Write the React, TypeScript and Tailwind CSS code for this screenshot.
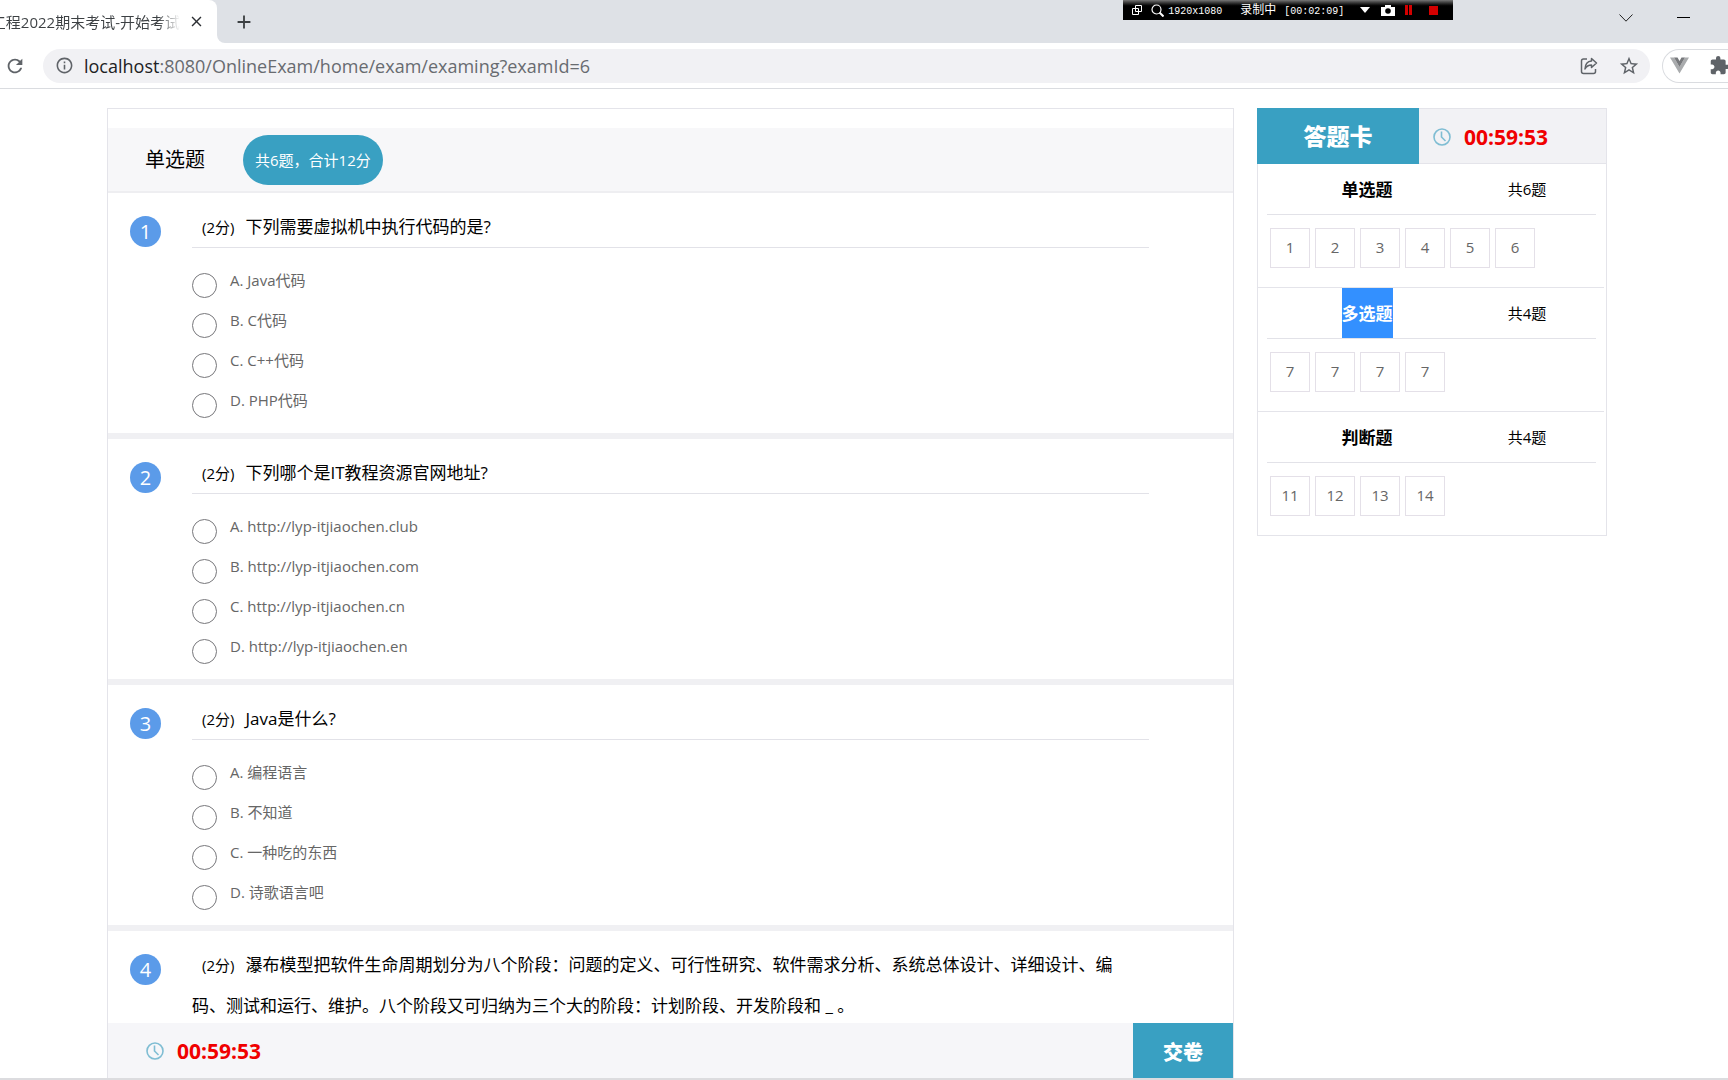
import { Fragment } from "react";
import { MdClose, MdAdd, MdRefresh, MdInfoOutline, MdStarBorder, MdExtension } from "react-icons/md";

const questions = [
  {
    title: "下列需要虚拟机中执行代码的是?",
    options: ["A. Java代码", "B. C代码", "C. C++代码", "D. PHP代码"],
  },
  {
    title: "下列哪个是IT教程资源官网地址?",
    options: [
      "A. http://lyp-itjiaochen.club",
      "B. http://lyp-itjiaochen.com",
      "C. http://lyp-itjiaochen.cn",
      "D. http://lyp-itjiaochen.en",
    ],
  },
  {
    title: "Java是什么?",
    options: ["A. 编程语言", "B. 不知道", "C. 一种吃的东西", "D. 诗歌语言吧"],
  },
  {
    title:
      "瀑布模型把软件生命周期划分为八个阶段：问题的定义、可行性研究、软件需求分析、系统总体设计、详细设计、编码、测试和运行、维护。八个阶段又可归纳为三个大的阶段：计划阶段、开发阶段和 _ 。",
    options: [],
  },
];

const cardSections = [
  { name: "单选题", count: "共6题", numbers: [1, 2, 3, 4, 5, 6], selected: false },
  { name: "多选题", count: "共4题", numbers: [7, 7, 7, 7], selected: true },
  { name: "判断题", count: "共4题", numbers: [11, 12, 13, 14], selected: false },
];

function ClockIcon() {
  return (
    <svg className="h-[18px] w-[18px] shrink-0" viewBox="0 0 18 18" fill="none" stroke="#7fbdd3" strokeWidth="1.6">
      <circle cx="9" cy="9" r="8" />
      <path d="M8.5 3.5V9l4 4" />
    </svg>
  );
}

function Timer() {
  return (
    <div className="flex items-center gap-[13px]">
      <ClockIcon />
      <span className="text-[21px] font-bold leading-7 text-[#f00000]">00:59:53</span>
    </div>
  );
}

function RecorderBar() {
  return (
    <div className="absolute left-[65%] top-0 flex h-5 w-[330px] items-center bg-gradient-to-b from-[#777] via-black via-35% to-black pl-2 font-['Liberation_Mono','Noto_Sans_CJK_SC',monospace] text-[10px] leading-5 text-white">
      <svg className="h-3 w-3" viewBox="0 0 12 12" fill="none" stroke="#fff">
        <path d="M4.5 1.5h6v6h-6z M7.5 4.5h-6v6h6z" />
      </svg>
      <svg className="ml-2 h-[13px] w-[13px]" viewBox="0 0 13 13" fill="none" stroke="#fff" strokeWidth="1.2">
        <circle cx="5.5" cy="5.5" r="4.5" />
        <path d="M8.5 8.5l4 4" strokeWidth="2" />
      </svg>
      <span className="ml-1 pt-1">1920x1080</span>
      <span className="ml-[18px] pt-0.5 text-xs leading-5">录制中</span>
      <span className="ml-2 pt-1">[00:02:09]</span>
      <svg className="ml-4 h-[6px] w-[10px]" viewBox="0 0 10 6">
        <path d="M0 0h10L5 6z" fill="#fff" />
      </svg>
      <svg className="ml-[11px] h-[11px] w-[14px]" viewBox="0 0 14 11">
        <path d="M0 2h4V0h6v2h4v9H0z" fill="#fff" />
        <circle cx="7" cy="6" r="2.8" fill="#000" />
      </svg>
      <svg className="ml-[10px] h-[10px] w-[7px]" viewBox="0 0 7 10">
        <path d="M0 0h3v10H0z M4 0h3v10H4z" fill="#d40000" />
      </svg>
      <svg className="ml-[17px] h-[9px] w-[9px]" viewBox="0 0 9 9">
        <path d="M0 0h9v9H0z" fill="#d40000" />
      </svg>
    </div>
  );
}

function TabStrip() {
  return (
    <div className="flex h-[43px] shrink-0 bg-[#dee1e6]">
      <div className="flex w-[217px] items-center overflow-hidden rounded-tr-lg bg-white">
        <div className="flex w-[180px] justify-end overflow-hidden bg-gradient-to-r from-[#3c4043] from-88% to-transparent bg-clip-text text-[15px] leading-5 text-transparent">
          <span className="whitespace-nowrap">工程2022期末考试-开始考试</span>
        </div>
        <button aria-label="关闭标签页" className="ml-2 text-[#2c2f33]">
          <MdClose size={17} />
        </button>
      </div>
      <div className="bg-white">
        <div className="h-full w-2 rounded-bl-lg bg-[#dee1e6]" />
      </div>
      <button aria-label="新标签页" className="ml-2 text-[#3c4043]">
        <MdAdd size={22} />
      </button>
      <div className="ml-auto flex items-center gap-11 pb-2 pr-[38px]">
        <button aria-label="搜索标签页">
          <svg className="h-2 w-[14px]" viewBox="0 0 14 8" fill="none" stroke="#222">
            <path d="M.5.5L7 7.2 13.5.5" />
          </svg>
        </button>
        <button aria-label="最小化" className="h-2.5 w-[13px]">
          <span className="block h-px bg-black" />
        </button>
      </div>
    </div>
  );
}

function Toolbar() {
  return (
    <div className="flex h-[46px] shrink-0 items-center overflow-hidden border-b border-[#dadce0] bg-white pl-1 text-[#5f6368]">
      <button aria-label="重新加载">
        <MdRefresh size={22} />
      </button>
      <div className="ml-[17px] flex h-[34px] flex-1 items-center rounded-full bg-[#f1f1f4] pl-3 pr-[10px]">
        <MdInfoOutline size={19} />
        <a href="#" className="ml-[10px] text-lg leading-6 text-[#686b70]">
          <span className="text-[#202124]">localhost</span>:8080/OnlineExam/home/exam/examing?examId=6
        </a>
        <button aria-label="分享" className="ml-auto">
          <svg className="h-[18px] w-[18px]" viewBox="0 0 18 18" fill="none" stroke="currentColor" strokeWidth="1.5" strokeLinejoin="round">
            <path d="M7 2H3.500Q1.500 2 1.500 4v10.500q0 2 2 2h10q2 0 2-2V12" />
            <path d="M11.500 1.500l5 4.500-5 4.500V8Q7 8 5 12q.3-7.500 6.500-8z" />
          </svg>
        </button>
        <button aria-label="收藏" className="ml-5">
          <MdStarBorder size={22} />
        </button>
      </div>
      <div className="ml-3 flex h-[34px] w-[66px] shrink-0 items-center rounded-l-full border border-r-0 border-[#dadce0] pl-[7px]">
        <svg className="h-[17px] w-[19px] shrink-0" viewBox="0 0 19 16">
          <path d="M0 0h4l5.500 9.500L15 0h4L9.500 16z" fill="#a9abad" />
          <path d="M4 0h3.500l2 3.500 2-3.500H15L9.500 9.500z" fill="#77797c" />
        </svg>
        <button aria-label="扩展程序" className="ml-5">
          <MdExtension size={21} />
        </button>
      </div>
    </div>
  );
}

function Question({ index, title, options }: { index: number; title: string; options: string[] }) {
  return (
    <fieldset className="flex border-b-[6px] border-[#f0f0f3] pb-2 pl-[22px] pr-[84px]">
      <div className="mt-[23px] h-[31px] w-[31px] shrink-0 rounded-full bg-[#5b9be9] text-center text-xl leading-[31px] text-white">
        {index}
      </div>
      <div className="ml-[31px] flex-1 pt-[13px]">
        <h3 className="border-b border-[#e2e2e8] pr-7 text-[17px] leading-[41px] text-black">
          <span className="ml-[10px] mr-[11px] text-[15px] leading-none">(2分)</span>
          {title}
        </h3>
        <div className="mt-[17px]">
          {options.map((option) => (
            <label key={option} className="flex h-10 items-start text-[15px] leading-[30px] text-[#666]">
              <input
                type="radio"
                name={`question-${index}`}
                className="mr-[13px] mt-2 h-[25px] w-[25px] shrink-0 appearance-none rounded-full border-[1.5px] border-[#77777b] bg-white checked:bg-[#5b9be9]"
              />
              {option}
            </label>
          ))}
        </div>
      </div>
    </fieldset>
  );
}

function AnswerCard() {
  return (
    <aside className="w-[350px] shrink-0 self-start border border-t-0 border-[#e4e4ea]">
      <div className="-ml-px flex h-14 border-y border-[#e4e4ea] bg-[#f2f2f5]">
        <h2 className="-my-px flex w-[162px] items-center justify-center bg-[#39a0c2] text-[23px] font-black leading-8 text-white">
          答题卡
        </h2>
        <div className="flex items-center pl-[14px] pt-0.5">
          <Timer />
        </div>
      </div>
      {cardSections.map((section, i) => (
        <Fragment key={section.name}>
          {i > 0 && <hr className="mr-0.5 border-[#e4e4ea]" />}
          <div className="ml-[9px] mr-[10px] flex h-[51px] border-b border-[#e2e2e8] leading-[51px]">
            <h3 className="w-[200px] text-center text-[17px] font-bold text-black">
              <span className={section.selected ? "inline-block h-[50px] bg-[#3390ff] text-white" : "inline-block"}>
                {section.name}
              </span>
            </h3>
            <span className="w-[120px] text-center text-[15px] text-black">{section.count}</span>
          </div>
          <div className="flex gap-[5px] pb-[19px] pl-3 pt-[13px]">
            {section.numbers.map((n, k) => (
              <a
                key={k}
                href={`#question-${n}`}
                className="h-10 w-10 border border-[#e4e0e8] text-center text-[15px] leading-9 text-[#666]"
              >
                {n}
              </a>
            ))}
          </div>
        </Fragment>
      ))}
    </aside>
  );
}

function App() {
  return (
    <div className="relative flex h-screen flex-col overflow-hidden border-b-2 border-[#dcdcdf] bg-white font-['Open_Sans','Noto_Sans_CJK_SC',sans-serif]">
      <TabStrip />
      <RecorderBar />
      <Toolbar />
      <div className="flex min-h-0 flex-1 gap-[23px] pl-[107px] pr-[121px] pt-[19px]">
        <main className="flex min-w-0 flex-1 flex-col border border-b-0 border-[#e4e4ea]">
          <div className="min-h-0 flex-1 overflow-hidden pt-[19px]">
            <div className="flex h-[65px] items-center border-b-2 border-[#eeeef1] bg-[#f7f7f9] pl-[37px]">
              <h2 className="text-xl leading-7 text-black">单选题</h2>
              <span className="ml-[38px] h-[50px] rounded-full bg-[#39a0c2] px-3 text-[15px] leading-[50px] text-white">
                共6题，合计12分
              </span>
            </div>
            {questions.map((q, i) => (
              <Question key={i} index={i + 1} title={q.title} options={q.options} />
            ))}
          </div>
          <div className="flex h-[55px] shrink-0 bg-[#f6f6f9] pl-[38px]">
            <div className="flex items-center">
              <Timer />
            </div>
            <button className="ml-auto w-[100px] bg-[#39a0c2] pt-1 text-xl font-black leading-8 text-white">交卷</button>
          </div>
        </main>
        <AnswerCard />
      </div>
    </div>
  );
}

export default App;
